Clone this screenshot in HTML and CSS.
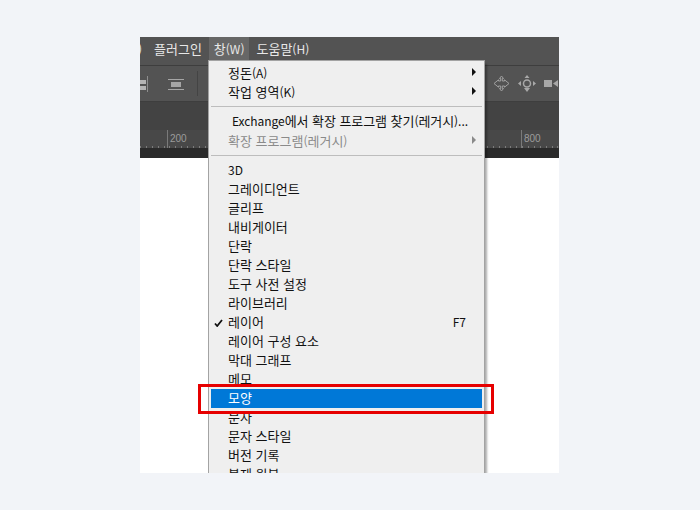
FILE: index.html
```html
<!DOCTYPE html>
<html lang="ko">
<head>
<meta charset="utf-8">
<title>창 메뉴</title>
<link rel="stylesheet" href="styles.css">
</head>
<body>
<div class="shot">
  <header class="menubar">
    <span class="mb-cut">)</span>
    <span class="mb-item">플러그인</span>
    <span class="mb-item active">창<span class="lat">(W)</span></span>
    <span class="mb-item help">도움말<span class="lat">(H)</span></span>
  </header>
  <div class="toolbar">
    <div class="tools-left">
      <svg class="ico" width="16" height="16" viewBox="0 0 16 16"><path d="M0 4h14v4H0zM0 10h14v4H0z" fill="#b4b4b4"/><path d="M15 0h1v16h-1z" fill="#8e8e8e"/></svg>
      <svg class="ico" width="16" height="16" viewBox="0 0 16 16"><path d="M0 3h16v1H0zM3 6h10v5H3zM0 13h16v1H0z" fill="#a6a6a6"/></svg>
      <i class="tool-sep"></i>
    </div>
    <div class="tools-right">
      <svg width="17" height="17" viewBox="0 0 17 17" fill="none" stroke="#a0a0a0"><path d="M8.500 1 6.500 3.500h1.200V6H5.500L5.500 4.800 1 8.500l4.500 3.700V11h2.200v2.500H6.500l2 2.500 2-2.500H9.300V11h2.200v1.200L16 8.500l-4.500-3.700V6H9.300V3.500h1.200z"/></svg>
      <svg width="18" height="17" viewBox="0 0 18 17"><circle cx="9" cy="8.500" r="3.500" fill="none" stroke="#a8a8a8" stroke-width="1.500"/><path d="M9 0 6.500 3h5zM6 13h6l-3 4zM0 8.500 3 6v5zM18 8.500 15 6v5z" fill="#a8a8a8"/></svg>
      <svg width="16" height="17" viewBox="0 0 16 17"><path d="M0 5h8v7H0zM9 8.500 14 5v7z" fill="#a8a8a8"/></svg>
    </div>
  </div>
  <div class="tabbar"></div>
  <div class="ruler">
    <span class="r-label r-200">200</span>
    <span class="r-label r-800">800</span>
  </div>
  <div class="dark-strip"></div>
  <main class="canvas"></main>

  <nav class="menu">
    <div class="row"><span>정돈<span class="lat">(A)</span></span><b class="arrow"></b></div>
    <div class="row"><span>작업 영역<span class="lat">(K)</span></span><b class="arrow"></b></div>
    <hr class="sep first-sep">
    <div class="row ex"><span><span class="lat">Exchange</span>에서 확장 프로그램 찾기<span class="lat">(</span>레거시<span class="lat">)...</span></span></div>
    <div class="row dim"><span>확장 프로그램<span class="lat">(</span>레거시<span class="lat">)</span></span><b class="arrow"></b></div>
    <hr class="sep second-sep">
    <div class="row"><span class="lat">3D</span></div>
    <div class="row">그레이디언트</div>
    <div class="row">글리프</div>
    <div class="row">내비게이터</div>
    <div class="row">단락</div>
    <div class="row">단락 스타일</div>
    <div class="row">도구 사전 설정</div>
    <div class="row">라이브러리</div>
    <div class="row"><svg class="check" width="9" height="8" viewBox="0 0 9 8"><path d="M1 4.500 3.200 7 8 1" fill="none" stroke="#111" stroke-width="1.800"/></svg><span>레이어</span><em class="key lat">F7</em></div>
    <div class="row">레이어 구성 요소</div>
    <div class="row">막대 그래프</div>
    <div class="row">메모</div>
    <div class="row hl">모양</div>
    <div class="row">문자</div>
    <div class="row">문자 스타일</div>
    <div class="row">버전 기록</div>
    <div class="row">복제 원본</div>
  </nav>
  <div class="redbox"></div>
</div>
</body>
</html>
```
FILE: styles.css
```css
* { box-sizing: border-box; }
html, body { margin: 0; height: 100%; background: #f2f4f8; overflow: hidden; }
body { padding: 37px 0 0 140px; font-family: "Noto Sans CJK KR", "Noto Sans", sans-serif; }
.shot { position: relative; width: 419px; height: 436px; overflow: hidden; background: #fff; }
.lat { font-size: 12px; }
.menubar { height: 29px; background: #535353; border-bottom: 1px solid #3e3e3e; display: flex; align-items: stretch; color: #e8e8e8; font-size: 13px; }
.mb-cut { width: 3px; margin-right: 5px; line-height: 23px; font-size: 12px; overflow: hidden; text-indent: -2px; }
.mb-item { padding: 0 6px; line-height: 23px; height: 23px; }
.mb-item.active { background: #676767; margin-left: 1px; padding: 0 5px; }
.mb-item.help { padding-left: 7px; }
.toolbar { height: 36px; background: #535353; border-bottom: 1px solid #3e3e3e; display: flex; justify-content: space-between; align-items: center; }
.tools-left { display: flex; align-items: center; gap: 20px; margin-left: -8px; }
.tools-right { display: flex; align-items: center; gap: 8px; width: 66px; overflow: hidden; flex-shrink: 0; }
.tools-right svg { flex-shrink: 0; }
.tool-sep { width: 1px; height: 25px; background: #444; margin-left: -7px; }
.tabbar { height: 28px; background: #434343; }
.ruler { position: relative; height: 18px; background-color: #484848; background-image: repeating-linear-gradient(90deg, #7c7c7c 0 1px, transparent 1px 5.88px); background-size: 100% 2px; background-position: 0 16px; background-repeat: no-repeat; }
.r-label { position: absolute; top: 0; font-size: 10px; line-height: 18px; color: #9c9c9c; font-family: "Liberation Sans", sans-serif; padding-left: 2px; border-left: 1px solid #7a7a7a; }
.r-200 { left: 27px; }
.r-800 { left: 381px; }
.dark-strip { height: 10px; background: #2a2a2a; }
.canvas { height: 278px; background: #fff; }
.menu { position: absolute; left: 68px; top: 23px; width: 277px; height: 430px; padding: 2px; background: #efefef; border: 1px solid #a3a3a3; box-shadow: 3px 3px 2px -1px rgba(0,0,0,.32); color: #111; font-size: 13px; }
.row { position: relative; height: 19px; line-height: 19px; padding-left: 17px; white-space: nowrap; }
.second-sep ~ .row { line-height: 17px; }
.row.ex { padding-left: 21px; height: 20px; letter-spacing: -.06px; }
.row.dim { color: #8a8a8a; }
.row.hl { background: #0078d7; color: #fff; }
.arrow { position: absolute; right: 6px; top: 5px; width: 0; height: 0; border-left: 4px solid #111; border-top: 4px solid transparent; border-bottom: 4px solid transparent; }
.dim .arrow { border-left-color: #8a8a8a; }
.check { position: absolute; left: 3px; top: 6px; }
.key { position: absolute; right: 16px; top: 0; font-style: normal; }
.sep { height: 2px; margin: 0; border: 0; border-top: 1px solid #bdbdbd; }
.first-sep { margin-top: 5px; margin-bottom: 3px; }
.second-sep { margin-top: 5px; margin-bottom: 4px; }
.redbox { position: absolute; left: 58px; top: 347px; width: 296px; height: 30px; border: 3px solid #e60000; }
```
